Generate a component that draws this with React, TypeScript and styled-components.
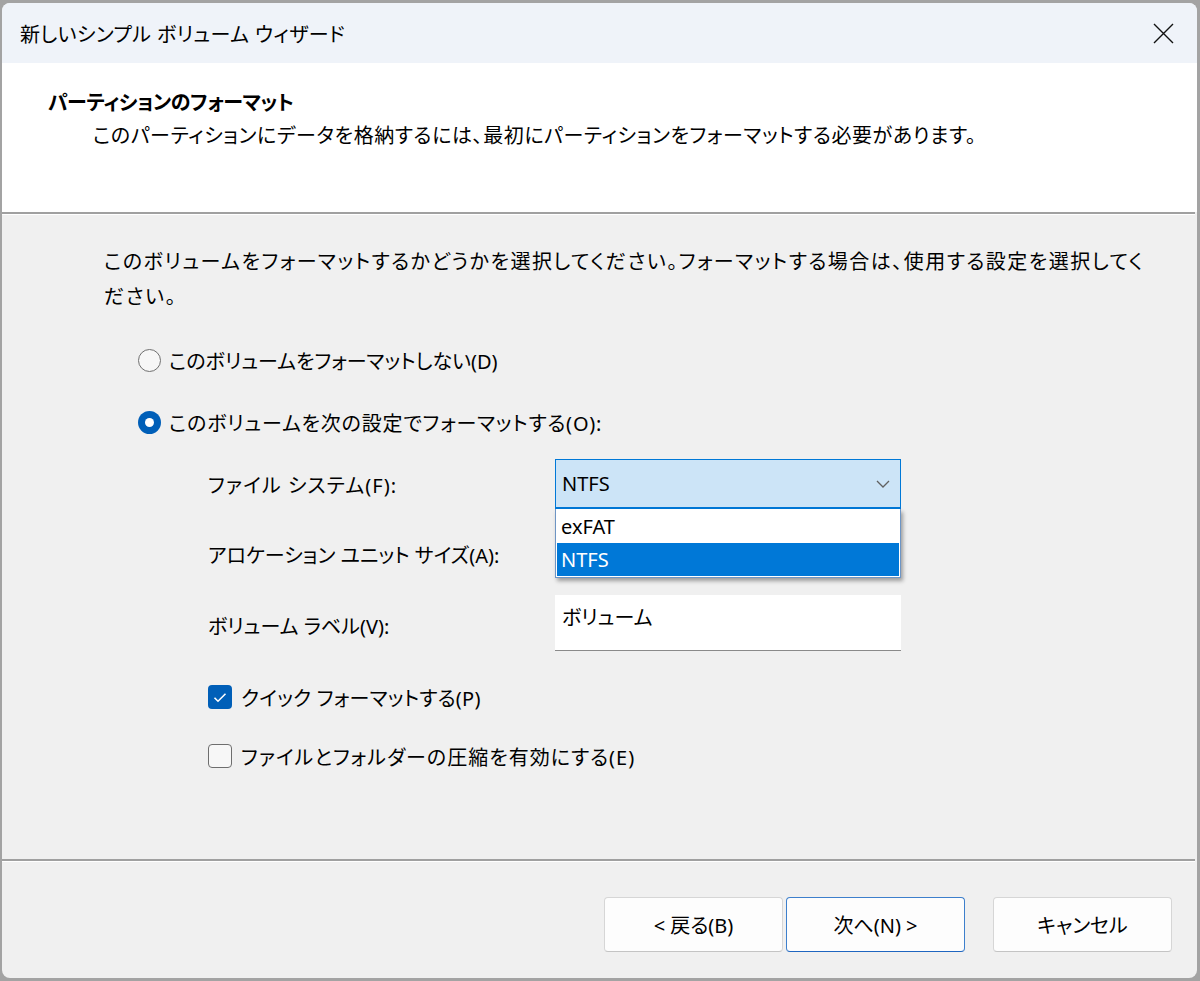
import styled, { createGlobalStyle } from "styled-components";

const GlobalStyle = createGlobalStyle`
  html, body {
    margin: 0;
    padding: 0;
    background: #a3a3a3;
  }
  body {
    font-family: "Noto Sans", "Noto Sans CJK JP", sans-serif;
    font-size: 20px;
    color: #000;
    font-feature-settings: "palt";
  }
`;

// Yu Gothic UI sets some runs a bit looser than Noto with palt, so text can be widened per use
const Text = styled.span<{ $ls?: number }>`
  letter-spacing: ${(p) => p.$ls || 0}px;
`;

const Window = styled.div`
  margin: 3px 3px 3px 2px;
  height: 975px;
  border-radius: 8px;
  overflow: hidden;
  background: #f0f0f0;
  display: flex;
  flex-direction: column;
`;

const TitleBar = styled.div`
  height: 60px;
  flex: none;
  background: #eff3f9;
  display: flex;
  align-items: center;
  justify-content: space-between;
  padding: 0 23px 0 18px;
`;

const Header = styled.div`
  height: 149px;
  flex: none;
  background: #fff;
  padding: 23px 0 0 46px;
  box-sizing: border-box;
`;

const HeaderTitle = styled.div`
  font-weight: bold;
  font-size: 20px;
  line-height: 33px;
  letter-spacing: -0.4px;
`;

const HeaderSub = styled.div`
  margin-left: 45px;
  line-height: 33px;
  letter-spacing: 0.6px;
`;

const Separator = styled.div`
  flex: none;
  height: 2px;
  background: #a0a0a0;
  border-bottom: 1px solid #fff;
  margin-right: 2px;
`;

const Body = styled.div`
  flex: 1;
  padding: 29px 0 0 102px;
`;

const Intro = styled.p`
  margin: 0;
  line-height: 35px;
  width: 1048px;
  letter-spacing: 1.5px;
`;

const OptionList = styled.div`
  margin-top: 26px;
  margin-left: 34px;
  display: flex;
  flex-direction: column;
  gap: 22px;
`;

const OptionRow = styled.label`
  display: flex;
  align-items: center;
  height: 40px;
  gap: 8px;
`;

const Radio = styled.span<{ $checked?: boolean }>`
  width: 23px;
  height: 23px;
  box-sizing: border-box;
  border-radius: 50%;
  border: ${(p) => (p.$checked ? "none" : "1px solid #707070")};
  background: ${(p) => (p.$checked ? "#005fb8" : "#f7f7f7")};
  display: flex;
  align-items: center;
  justify-content: center;
  &::after {
    content: "";
    display: ${(p) => (p.$checked ? "block" : "none")};
    width: 9px;
    height: 9px;
    border-radius: 50%;
    background: #fff;
  }
`;

const FormGrid = styled.div`
  margin-top: 17px;
  margin-left: 104px;
  display: grid;
  grid-template-columns: 347px 346px;
  grid-template-rows: 50px 50px 56px;
  row-gap: 18px;
  align-items: center;
`;

const FieldLabel = styled.div<{ $shift?: number }>`
  padding-top: ${(p) => p.$shift || 0}px;
`;

const ComboWrap = styled.div`
  position: relative;
  height: 100%;
`;

const Combo = styled.div<{ $active?: boolean }>`
  height: 100%;
  box-sizing: border-box;
  border: 1px solid ${(p) => (p.$active ? "#0078d7" : "#c8c8c8")};
  border-bottom-width: 2px;
  background: ${(p) => (p.$active ? "#cce4f7" : "#fdfdfd")};
  display: flex;
  align-items: center;
  justify-content: space-between;
  padding: 0 10px 0 6px;
`;

const DropList = styled.div`
  position: absolute;
  left: 0;
  right: 0;
  top: 100%;
  z-index: 2;
  background: #fff;
  border: 1px solid #6e95c4;
  border-top: none;
  box-shadow: 2px 3px 4px rgba(0, 0, 0, 0.35);
  padding: 1px;
  box-sizing: border-box;
`;

const DropItem = styled.div<{ $selected?: boolean }>`
  height: 33px;
  display: flex;
  align-items: center;
  padding-left: 4px;
  background: ${(p) => (p.$selected ? "#0078d7" : "transparent")};
  color: ${(p) => (p.$selected ? "#fff" : "#000")};
`;

const TextInput = styled.div`
  height: 100%;
  box-sizing: border-box;
  background: #fff;
  border-bottom: 1px solid #8a8a8a;
  padding: 8px 0 0 7px;
  line-height: 30px;
`;

const CheckList = styled.div`
  margin-top: 26px;
  margin-left: 104px;
  display: flex;
  flex-direction: column;
  gap: 19px;
`;

const CheckBox = styled.span<{ $checked?: boolean }>`
  width: 24px;
  height: 24px;
  box-sizing: border-box;
  border-radius: 4px;
  border: ${(p) => (p.$checked ? "none" : "1px solid #6e6e6e")};
  background: ${(p) => (p.$checked ? "#005fb8" : "#f7f7f7")};
  display: flex;
  align-items: center;
  justify-content: center;
  margin-right: 1px;
`;

const Footer = styled.div`
  height: 116px;
  flex: none;
  display: flex;
  justify-content: flex-end;
  align-items: flex-start;
  padding: 35px 25px 0 0;
  box-sizing: border-box;
`;

const Button = styled.button<{ $primary?: boolean; $gap?: number }>`
  width: 179px;
  height: 55px;
  margin-left: ${(p) => p.$gap || 0}px;
  font: inherit;
  color: #000;
  background: #fdfdfd;
  border: 1px solid ${(p) => (p.$primary ? "#3d7fcc" : "#d6d6d6")};
  border-bottom-color: ${(p) => (p.$primary ? "#1f66c0" : "#c4c4c4")};
  border-radius: 4px;
  padding: 0;
`;

const CloseIcon = () => (
  <svg width="21" height="21" viewBox="0 0 21 21">
    <path d="M1 1L20 20M20 1L1 20" stroke="#111" strokeWidth="1.4" fill="none" />
  </svg>
);

const Chevron = () => (
  <svg width="14" height="8" viewBox="0 0 14 8">
    <path d="M1 1L7 7L13 1" stroke="#606060" strokeWidth="1.3" fill="none" />
  </svg>
);

const CheckMark = () => (
  <svg width="14" height="11" viewBox="0 0 14 11">
    <path d="M1.5 5.8L5 9.2L12.5 1.8" stroke="#fff" strokeWidth="1.6" fill="none" />
  </svg>
);

export default function App() {
  return (
    <>
      <GlobalStyle />
      <Window>
        <TitleBar>
          <Text $ls={0.4}>新しいシンプル ボリューム ウィザード</Text>
          <CloseIcon />
        </TitleBar>
        <Header>
          <HeaderTitle>パーティションのフォーマット</HeaderTitle>
          <HeaderSub>
            このパーティションにデータを格納するには、最初にパーティションをフォーマットする必要があります。
          </HeaderSub>
        </Header>
        <Separator />
        <Body>
          <Intro>
            このボリュームをフォーマットするかどうかを選択してください。フォーマットする場合は、使用する設定を選択してください。
          </Intro>
          <OptionList>
            <OptionRow>
              <Radio />
              <Text>このボリュームをフォーマットしない(D)</Text>
            </OptionRow>
            <OptionRow>
              <Radio $checked />
              <Text $ls={0.8}>このボリュームを次の設定でフォーマットする(O):</Text>
            </OptionRow>
          </OptionList>
          <FormGrid>
            <FieldLabel>
              <Text $ls={1.1}>ファイル システム(F):</Text>
            </FieldLabel>
            <ComboWrap>
              <Combo $active>
                NTFS
                <Chevron />
              </Combo>
              <DropList>
                <DropItem>exFAT</DropItem>
                <DropItem $selected>NTFS</DropItem>
              </DropList>
            </ComboWrap>
            <FieldLabel $shift={4}>アロケーション ユニット サイズ(A):</FieldLabel>
            <ComboWrap>
              {/* covered by the open list above */}
              <Combo />
            </ComboWrap>
            <FieldLabel $shift={4}>ボリューム ラベル(V):</FieldLabel>
            <TextInput>ボリューム</TextInput>
          </FormGrid>
          <CheckList>
            <OptionRow>
              <CheckBox $checked>
                <CheckMark />
              </CheckBox>
              <Text $ls={0.25}>クイック フォーマットする(P)</Text>
            </OptionRow>
            <OptionRow>
              <CheckBox />
              <Text $ls={1}>ファイルとフォルダーの圧縮を有効にする(E)</Text>
            </OptionRow>
          </CheckList>
        </Body>
        <Separator />
        <Footer>
          <Button>&lt; 戻る(B)</Button>
          <Button $primary $gap={3}>
            次へ(N) &gt;
          </Button>
          <Button $gap={28}>キャンセル</Button>
        </Footer>
      </Window>
    </>
  );
}
